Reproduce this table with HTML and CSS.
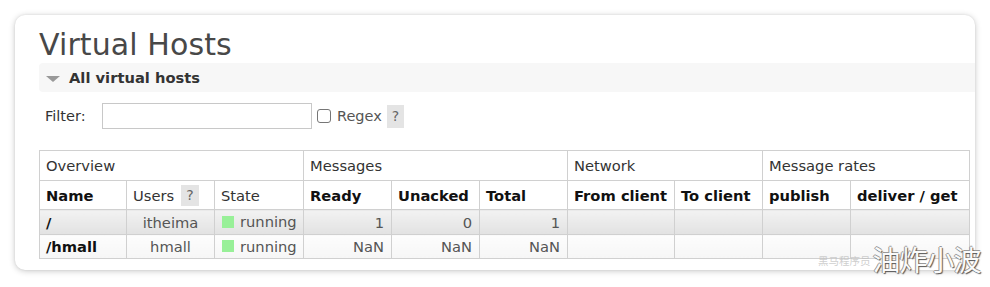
FILE: index.html
```html
<!DOCTYPE html>
<html>
<head>
<meta charset="utf-8">
<link rel="stylesheet" href="styles.css">
</head>
<body>
<div class="card">
  <h1 class="title">Virtual Hosts</h1>
  <div class="section-head"><span class="tri"></span><span>All virtual hosts</span></div>
  <div class="filter">
    <label class="filter-label">Filter:</label>
    <input class="filter-input" type="text">
    <span class="check"></span>
    <span class="regex">Regex</span>
    <span class="help">?</span>
  </div>
  <table class="list">
    <colgroup>
      <col style="width:87px"><col style="width:88px"><col style="width:89px">
      <col style="width:88px"><col style="width:88px"><col style="width:88px">
      <col style="width:107px"><col style="width:88px">
      <col style="width:88px"><col style="width:119px">
    </colgroup>
    <thead>
      <tr class="group">
        <th colspan="3">Overview</th>
        <th colspan="3">Messages</th>
        <th colspan="2">Network</th>
        <th colspan="2">Message rates</th>
      </tr>
      <tr class="cols">
        <th>Name</th>
        <th class="plain"><span class="users">Users <span class="help small">?</span></span></th>
        <th class="plain">State</th>
        <th>Ready</th>
        <th>Unacked</th>
        <th>Total</th>
        <th>From client</th>
        <th>To client</th>
        <th>publish</th>
        <th>deliver / get</th>
      </tr>
    </thead>
    <tbody>
      <tr class="alt1">
        <td class="name">/</td>
        <td class="c">itheima</td>
        <td><span class="state"><span class="dot"></span>running</span></td>
        <td class="r">1</td>
        <td class="r">0</td>
        <td class="r">1</td>
        <td></td><td></td><td></td><td></td>
      </tr>
      <tr class="alt2">
        <td class="name">/hmall</td>
        <td class="c">hmall</td>
        <td><span class="state"><span class="dot"></span>running</span></td>
        <td class="r">NaN</td>
        <td class="r">NaN</td>
        <td class="r">NaN</td>
        <td></td><td></td><td></td><td></td>
      </tr>
    </tbody>
  </table>
</div>
<div class="watermark"><span class="wm-small">黑马程序员</span><span class="wm-big">油炸小波</span></div>
</body>
</html>
```
FILE: styles.css
```css
html, body {
  margin: 0;
  padding: 0;
  background: #ffffff;
}
body {
  width: 990px;
  height: 287px;
  position: relative;
  overflow: hidden;
  font-family: "DejaVu Sans", Verdana, sans-serif;
  color: #444;
}
.card {
  position: absolute;
  left: 15px;
  top: 15px;
  width: 960px;
  height: 255px;
  box-sizing: border-box;
  background: #fff;
  border-radius: 10px;
  box-shadow: 0 1px 6px rgba(0,0,0,0.22), 0 0 2px rgba(0,0,0,0.08);
  padding: 14px 0 0 24px;
  display: flex;
  flex-direction: column;
}
.title {
  margin: 0;
  font-weight: normal;
  font-size: 30px;
  line-height: 32px;
  color: #484848;
  letter-spacing: 0.1px;
}
.section-head {
  margin-top: 2px;
  height: 29px;
  background: #f7f7f7;
  border-radius: 4px 0 0 4px;
  display: flex;
  align-items: center;
  gap: 9px;
  padding-left: 7px;
  font-weight: bold;
  font-size: 14.7px;
  color: #333;
}
.tri {
  width: 0;
  height: 0;
  border-left: 7px solid transparent;
  border-right: 7px solid transparent;
  border-top: 6px solid #999;
  margin-top: 2px;
}
.filter {
  margin-top: 11px;
  display: flex;
  align-items: center;
  height: 26px;
  padding-left: 6px;
  font-size: 14.5px;
  color: #333;
}
.filter-label {
  width: 57px;
}
.filter-input {
  width: 210px;
  height: 26px;
  box-sizing: border-box;
  border: 1px solid #c8c8c8;
  margin: 0;
  padding: 0;
  background: #fff;
}
.check {
  width: 12px;
  height: 12px;
  border: 1px solid #767676;
  border-radius: 3px;
  margin-left: 5px;
  background: #fff;
}
.regex {
  margin-left: 6px;
  color: #555;
}
.help {
  display: inline-block;
  background: #e4e4e4;
  color: #666;
  height: 23px;
  line-height: 23px;
  padding: 0 5px;
  margin-left: 5px;
  font-size: 14px;
}
.users {
  display: inline-flex;
  align-items: center;
}
.help.small {
  height: 21px;
  line-height: 21px;
  margin-left: 7px;
}
.list {
  margin-top: 21px;
  border-collapse: collapse;
  table-layout: fixed;
  width: 930px;
  font-size: 14.7px;
}
.list th, .list td {
  border: 1px solid #d0d0d0;
  padding: 0 6px;
  white-space: nowrap;
  overflow: hidden;
}
.list th {
  text-align: left;
}
.group th {
  height: 29px;
  font-weight: normal;
  color: #333;
  background: #fff;
}
.cols th {
  height: 28px;
  font-weight: bold;
  color: #111;
  background: #fff;
}
.cols th.plain {
  font-weight: normal;
  color: #333;
}
.list td {
  color: #555;
}
.alt1 td {
  height: 24px;
  background: linear-gradient(#f2f2f2, #e2e2e2);
}
.alt2 td {
  height: 23px;
  background: linear-gradient(#fdfdfd, #f6f6f6);
}
.list td.name {
  font-weight: bold;
  color: #111;
}
.list td.c {
  text-align: center;
}
.list td.r {
  text-align: right;
  padding-right: 7px;
}
.state {
  display: inline-flex;
  align-items: center;
  gap: 6px;
  padding-left: 1px;
}
.dot {
  width: 12px;
  height: 12px;
  background: #98f098;
}
.watermark {
  position: absolute;
  left: 818px;
  top: 238px;
  display: flex;
  align-items: flex-end;
  font-family: "Noto Sans CJK SC", sans-serif;
}
.wm-small {
  font-size: 10.5px;
  color: rgba(190,190,190,0.75);
  margin-bottom: 12px;
  margin-right: 2px;
}
.wm-big {
  font-size: 28px;
  line-height: 42px;
  color: #fafafa;
  letter-spacing: -1px;
  text-shadow: 1px 1px 1px #555, -1px 0 0 #999, 0 -1px 0 #999;
}
```
